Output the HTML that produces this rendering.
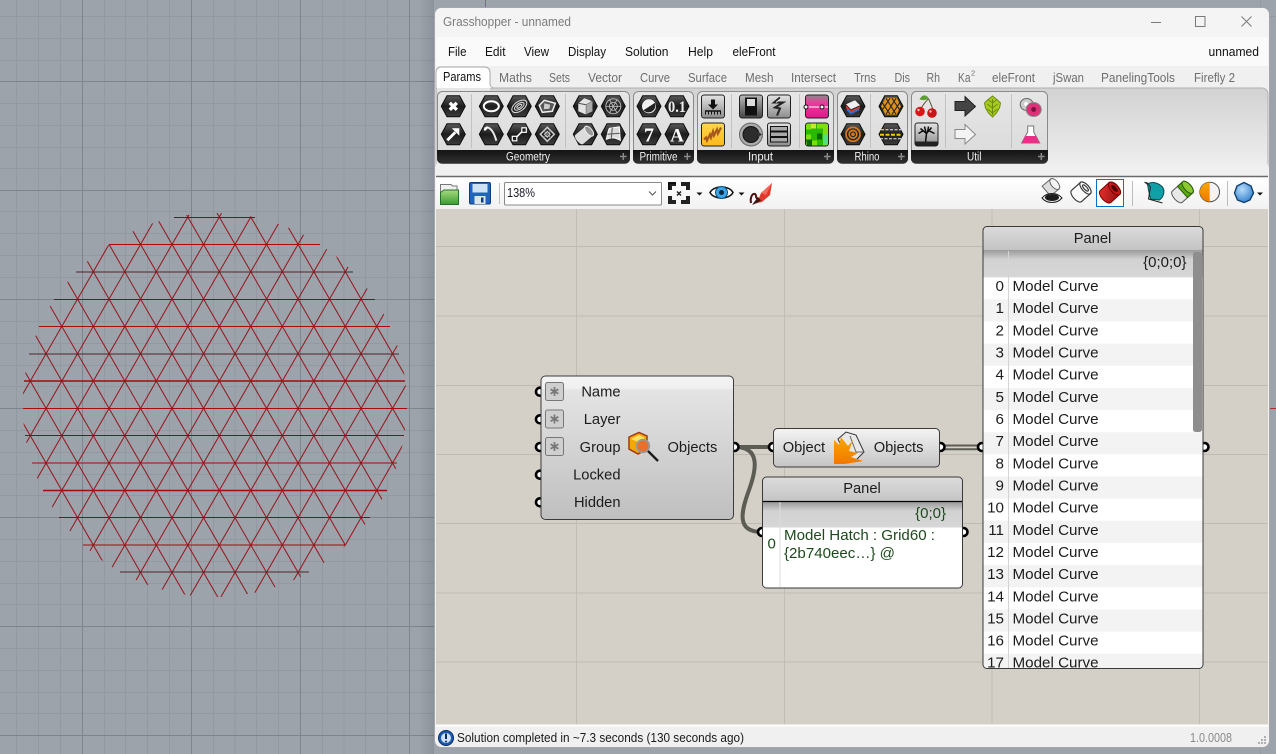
<!DOCTYPE html>
<html><head><meta charset="utf-8"><title>Grasshopper - unnamed</title>
<style>
html,body{margin:0;padding:0;width:1276px;height:754px;overflow:hidden;background:#9ca3ab}
svg{display:block}
text{font-family:"Liberation Sans",sans-serif}
</style></head><body>
<svg xmlns="http://www.w3.org/2000/svg" width="1276" height="754" viewBox="0 0 1276 754">
<defs>
<linearGradient id="hx" x1="0" y1="0" x2="0" y2="1"><stop offset="0" stop-color="#5a5a5a"/><stop offset=".5" stop-color="#1c1c1c"/><stop offset="1" stop-color="#3c3c3c"/></linearGradient>
<linearGradient id="rb" x1="0" y1="0" x2="0" y2="1"><stop offset="0" stop-color="#d2d2d2"/><stop offset="1" stop-color="#eeeeee"/></linearGradient>
<linearGradient id="pn" x1="0" y1="0" x2="0" y2="1"><stop offset="0" stop-color="#e6e6e6"/><stop offset="1" stop-color="#dadada"/></linearGradient>
<linearGradient id="ft" x1="0" y1="0" x2="0" y2="1"><stop offset="0" stop-color="#141414"/><stop offset="1" stop-color="#303030"/></linearGradient>
<linearGradient id="bt" x1="0" y1="0" x2="0" y2="1"><stop offset="0" stop-color="#e4e4e4"/><stop offset="1" stop-color="#8c8c8c"/></linearGradient>
<linearGradient id="bd" x1="0" y1="0" x2="0" y2="1"><stop offset="0" stop-color="#bbb"/><stop offset="1" stop-color="#444"/></linearGradient>
<linearGradient id="nd" x1="0" y1="0" x2="0" y2="1"><stop offset="0" stop-color="#f4f4f4"/><stop offset=".08" stop-color="#f0f0f0"/><stop offset=".1" stop-color="#e4e4e4"/><stop offset="1" stop-color="#bfbfbf"/></linearGradient>
<linearGradient id="nd2" x1="0" y1="0" x2="0" y2="1"><stop offset="0" stop-color="#f4f4f4"/><stop offset=".25" stop-color="#e8e8e8"/><stop offset="1" stop-color="#c4c4c4"/></linearGradient>
<linearGradient id="hd" x1="0" y1="0" x2="0" y2="1"><stop offset="0" stop-color="#dcdcdc"/><stop offset="1" stop-color="#c4c4c4"/></linearGradient>
<linearGradient id="sh" x1="0" y1="0" x2="0" y2="1"><stop offset="0" stop-color="#9a9a9a"/><stop offset=".35" stop-color="#d2d2d2"/><stop offset="1" stop-color="#d6d6d6"/></linearGradient>
<linearGradient id="tb" x1="0" y1="0" x2="0" y2="1"><stop offset="0" stop-color="#ffffff"/><stop offset="1" stop-color="#f2f2f2"/></linearGradient>
<linearGradient id="wsh" x1="0" y1="0" x2="1" y2="0"><stop offset="0" stop-color="#000" stop-opacity="0"/><stop offset="1" stop-color="#000" stop-opacity=".1"/></linearGradient>
<linearGradient id="pk" x1="0" y1="0" x2="0" y2="1"><stop offset="0" stop-color="#8a8a8a"/><stop offset=".35" stop-color="#ec3a9c"/><stop offset="1" stop-color="#e0188c"/></linearGradient>
<linearGradient id="yl" x1="0" y1="0" x2="0" y2="1"><stop offset="0" stop-color="#ffd84a"/><stop offset="1" stop-color="#fdb81e"/></linearGradient>
<linearGradient id="fd" x1="0" y1="0" x2="0" y2="1"><stop offset="0" stop-color="#a4dc7c"/><stop offset="1" stop-color="#3d9a34"/></linearGradient>
<linearGradient id="or" x1="0" y1="0" x2="0" y2="1"><stop offset="0" stop-color="#f8a800"/><stop offset="1" stop-color="#f07800"/></linearGradient>
<radialGradient id="bl" cx=".4" cy=".35" r=".7"><stop offset="0" stop-color="#b8dcf8"/><stop offset="1" stop-color="#2f7fd0"/></radialGradient>
<linearGradient id="red" x1="0" y1="0" x2="1" y2="1"><stop offset="0" stop-color="#e83030"/><stop offset="1" stop-color="#8c0c0c"/></linearGradient>
<polygon id="hex" points="-12,0 -6.3,-10.5 6.3,-10.5 12,0 6.3,10.5 -6.3,10.5" fill="url(#hx)" stroke="#0c0c0c" stroke-width="1"/>
<rect id="btn" x="-11.5" y="-11.5" width="23" height="23" rx="2.5" fill="url(#bt)" stroke="#222" stroke-width="1"/>
</defs>

<!-- viewport background -->
<rect width="1276" height="754" fill="#9ca3ab"/>
<g stroke="#9299a1" stroke-width="1" fill="none">
<path d="M16.5 0V754M38.5 0V754M60.5 0V754M104.5 0V754M125.5 0V754M147.5 0V754M169.5 0V754M213.500 0V754M235 0V754M256.500 0V754M278.500 0V754M322.500 0V754M344 0V754M365.500 0V754M387.500 0V754M1260.500 0V754"/>
<path d="M0 16.5H1276M0 38.5H434M0 60.5H434M0 103.5H434M0 125.5H434M0 147.5H434M0 168.5H434M0 211.5H434M0 233.5H434M0 255.5H434M0 277.5H434M0 321.5H434M0 343.5H434M0 365.5H434M0 386.5H434M0 430.5H434M0 452.5H434M0 474.5H434M0 495.5H434M0 539.5H434M0 561.5H434M0 583.5H434M0 604.5H434M0 648.5H434M0 670.5H434M0 692.5H434M0 713.5H434"/>
</g>
<g stroke="#7f858e" stroke-width="1" fill="none">
<path d="M82.5 0V754M191.5 0V754M300.5 0V754M409.5 0V754"/>
<path d="M0 81.5H434M0 190.5H434M0 299.5H434M0 408.5H434M0 517.5H434M0 626.5H434M0 735.5H434"/>
</g>
<path d="M485.5 0V7" stroke="#3aa03a"/>
<path d="M1270 408.5H1276" stroke="#b03030"/>
<rect x="418" y="0" width="16" height="754" fill="url(#wsh)"/>

<!-- hatch -->
<clipPath id="circ"><circle cx="214.7" cy="405" r="192"/></clipPath>
<g clip-path="url(#circ)" fill="none" stroke="#951a20" stroke-width="1.05">
<path d="M71.6 200l-236.2 410m267.7-410l-236.2 410m267.7-410l-236.2 410m267.7-410l-236.2 410m267.7-410l-236.2 410m267.7-410l-236.2 410m267.7-410l-236.2 410m267.7-410l-236.2 410m267.7-410l-236.2 410m267.7-410l-236.2 410m267.7-410l-236.2 410m267.7-410l-236.2 410m267.7-410l-236.2 410m267.7-410l-236.2 410m267.7-410l-236.2 410m267.7-410l-236.2 410m267.7-410l-236.2 410"/>
<path d="M-137 200l236.2 410m-204.7-410l236.2 410m-204.7-410l236.2 410m-204.7-410l236.2 410m-204.7-410l236.2 410m-204.7-410l236.2 410m-204.7-410l236.2 410m-204.7-410l236.2 410m-204.7-410l236.2 410m-204.7-410l236.2 410m-204.7-410l236.2 410m-204.7-410l236.2 410m-204.7-410l236.2 410m-204.7-410l236.2 410m-204.7-410l236.2 410m-204.7-410l236.2 410m-204.7-410l236.2 410"/>
</g>
<g fill="none" stroke-width="1">
<path d="M174 217.5H255M76 272H353M54 299.5H375M29 354H399M25 435.5H404M59 517.5H370M120 572H309" stroke="#50242a"/>
<path d="M109 244.5H320M39 326.5H390M23 408.5H407M32 463H397M83 545H345" stroke="#a80a0e"/>
<path d="M24 381H405M43 490.5H387" stroke="#a40a0e" stroke-width="1.6"/>
</g>

<!-- window -->
<rect x="434.5" y="7.5" width="835" height="740" rx="7" fill="#f1f1f1" stroke="#a4a8ae"/>
<path d="M436 37V13a5 5 0 0 1 5-5H1263a5 5 0 0 1 5 5V37z" fill="#f4f4f4"/>
<rect x="436" y="37" width="832" height="29" fill="#fafafa"/>
<rect x="436" y="66" width="832" height="22" fill="#f0f0f0"/>
<text x="443" y="26" font-size="12.5" fill="#7c7c7c" textLength="128" lengthAdjust="spacingAndGlyphs">Grasshopper - unnamed</text>
<g fill="none" stroke="#7a7a7a" stroke-width="1">
<path d="M1151 22.5H1161"/>
<rect x="1195.5" y="16.5" width="9.5" height="10"/>
<path d="M1241.5 16.5L1251.5 26.5M1251.5 16.5L1241.5 26.5"/>
</g>
<g font-size="12.5" fill="#111">
<text x="448" y="56" textLength="18.5" lengthAdjust="spacingAndGlyphs">File</text>
<text x="485" y="56" textLength="20.5" lengthAdjust="spacingAndGlyphs">Edit</text>
<text x="524" y="56" textLength="25" lengthAdjust="spacingAndGlyphs">View</text>
<text x="568" y="56" textLength="38" lengthAdjust="spacingAndGlyphs">Display</text>
<text x="625" y="56" textLength="43.5" lengthAdjust="spacingAndGlyphs">Solution</text>
<text x="688" y="56" textLength="25" lengthAdjust="spacingAndGlyphs">Help</text>
<text x="732.5" y="56" textLength="43" lengthAdjust="spacingAndGlyphs">eleFront</text>
<text x="1208.5" y="56" textLength="50.5" lengthAdjust="spacingAndGlyphs">unnamed</text>
</g>

<!-- ribbon -->
<path d="M436 88H1262a6 6 0 0 1 6 6V166H436z" fill="url(#rb)" stroke="#b0b0b0" stroke-width="1"/>
<rect x="436" y="164" width="832" height="13" fill="#f0f0f0"/>
<path d="M436 88V72a5 5 0 0 1 5-5H485a5 5 0 0 1 5 5V84a4 4 0 0 0 4 4" fill="#fff" stroke="#a8a8a8"/>
<path d="M437 88H490V92H437z" fill="#e6e6e6"/>
<text x="443" y="81" font-size="12.5" fill="#111" textLength="38" lengthAdjust="spacingAndGlyphs">Params</text>
<g font-size="13" fill="#6e6e6e">
<text x="499" y="82" textLength="33" lengthAdjust="spacingAndGlyphs">Maths</text>
<text x="549" y="82" textLength="21" lengthAdjust="spacingAndGlyphs">Sets</text>
<text x="588" y="82" textLength="34" lengthAdjust="spacingAndGlyphs">Vector</text>
<text x="640" y="82" textLength="30" lengthAdjust="spacingAndGlyphs">Curve</text>
<text x="688" y="82" textLength="39" lengthAdjust="spacingAndGlyphs">Surface</text>
<text x="745" y="82" textLength="28.5" lengthAdjust="spacingAndGlyphs">Mesh</text>
<text x="791" y="82" textLength="45" lengthAdjust="spacingAndGlyphs">Intersect</text>
<text x="854" y="82" textLength="22" lengthAdjust="spacingAndGlyphs">Trns</text>
<text x="894.5" y="82" textLength="15.5" lengthAdjust="spacingAndGlyphs">Dis</text>
<text x="926.5" y="82" textLength="13.5" lengthAdjust="spacingAndGlyphs">Rh</text>
<text x="958" y="82" textLength="12.5" lengthAdjust="spacingAndGlyphs">Ka</text>
<text x="971" y="75.5" font-size="7.5">2</text>
<text x="992" y="82" textLength="43" lengthAdjust="spacingAndGlyphs">eleFront</text>
<text x="1053" y="82" textLength="31" lengthAdjust="spacingAndGlyphs">jSwan</text>
<text x="1101" y="82" textLength="74" lengthAdjust="spacingAndGlyphs">PanelingTools</text>
<text x="1194" y="82" textLength="41" lengthAdjust="spacingAndGlyphs">Firefly 2</text>
</g>

<!-- ribbon panels -->
<g stroke="#8a8a8a">
<rect x="437.5" y="91.5" width="192" height="72" rx="5" fill="url(#pn)"/>
<rect x="633.5" y="91.5" width="60" height="72" rx="5" fill="url(#pn)"/>
<rect x="697.5" y="91.5" width="136" height="72" rx="5" fill="url(#pn)"/>
<rect x="837.5" y="91.5" width="70" height="72" rx="5" fill="url(#pn)"/>
<rect x="911.5" y="91.5" width="136" height="72" rx="5" fill="url(#pn)"/>
</g>
<g fill="url(#ft)">
<path d="M437 150H630V159a4.5 4.5 0 0 1-4.5 4.5H441.5a4.5 4.5 0 0 1-4.5-4.5z"/>
<path d="M633 150H694V159a4.5 4.5 0 0 1-4.5 4.5H637.5a4.5 4.5 0 0 1-4.5-4.5z"/>
<path d="M697 150H834V159a4.5 4.5 0 0 1-4.5 4.5H701.5a4.5 4.5 0 0 1-4.5-4.5z"/>
<path d="M837 150H908V159a4.5 4.5 0 0 1-4.5 4.5H841.5a4.5 4.5 0 0 1-4.5-4.5z"/>
<path d="M911 150H1048V159a4.5 4.5 0 0 1-4.5 4.5H915.5a4.5 4.5 0 0 1-4.5-4.5z"/>
</g>
<g stroke="#c2c2c2">
<path d="M471.5 94V148M565.5 94V148M731.5 94V148M799.5 94V148M870.5 94V148M945.5 94V148M1011.5 94V148"/>
</g>
<g font-size="11.5" fill="#f2f2f2">
<text x="506" y="160.5" textLength="44" lengthAdjust="spacingAndGlyphs">Geometry</text>
<text x="639.5" y="160.5" textLength="38" lengthAdjust="spacingAndGlyphs">Primitive</text>
<text x="748" y="160.5" textLength="25" lengthAdjust="spacingAndGlyphs">Input</text>
<text x="854.5" y="160.5" textLength="25" lengthAdjust="spacingAndGlyphs">Rhino</text>
<text x="967" y="160.5" textLength="14.5" lengthAdjust="spacingAndGlyphs">Util</text>
</g>
<g fill="none" stroke="#8a8a8a" stroke-width="1.5">
<path d="M623.3 153V160M620 156.5H626.6M687.3 153V160M684 156.5H690.6M827.3 153V160M824 156.5H830.6M901.3 153V160M898 156.5H904.6M1041.3 153V160M1038 156.5H1044.6"/>
</g>

<!-- Geometry icons -->
<g transform="translate(453.3 106.3)"><use href="#hex"/><path d="M-3.5 -3.5L3.5 3.5M3.5 -3.5L-3.5 3.5" stroke="#fff" stroke-width="3.4" fill="none"/></g>
<g transform="translate(453.3 134.3)"><use href="#hex"/><path d="M-6 6L2 -2" stroke="#fff" stroke-width="2.8"/><path d="M-1.5 -6H6V1.500z" fill="#fff"/></g>
<g transform="translate(491.3 106.3)"><use href="#hex"/><ellipse rx="7.5" ry="5" fill="none" stroke="#fff" stroke-width="2"/></g>
<g transform="translate(491.3 134.3)"><use href="#hex"/><path d="M-7 -5.5L-4 -7C0 -6 3 -1 5 6.5" fill="none" stroke="#e8e8e8" stroke-width="2"/><path d="M-7 -4L-4 -7" stroke="#fff" stroke-width="2"/></g>
<g transform="translate(519.3 106.3)"><use href="#hex"/><g transform="rotate(-35)" fill="none" stroke="#ddd"><ellipse rx="8.500" ry="4.800"/><ellipse rx="5.5" ry="2.8"/><ellipse rx="3" ry="1.2"/></g></g>
<g transform="translate(519.3 134.3)"><use href="#hex"/><path d="M-4 4L4 -4" stroke="#fff" stroke-width="1.5"/><rect x="-7" y="2" width="4.5" height="4.5" fill="#222" stroke="#fff" stroke-width="1.2"/><rect x="2.5" y="-6.5" width="4.5" height="4.5" fill="#222" stroke="#fff" stroke-width="1.2"/></g>
<g transform="translate(547.3 106.3)"><use href="#hex"/><path d="M-8 -1L-3 -6L8 -3L5 5L-5 6z" fill="#555" stroke="#eee" stroke-width="1.5"/><path d="M-3 -3L3 -1.5L2 2.5L-3.5 3z" fill="#ccc"/></g>
<g transform="translate(547.3 134.3)"><use href="#hex"/><path d="M0 -7L7 0L0 7L-7 0z" fill="none" stroke="#ccc" stroke-width="1.5"/><path d="M-3.5 -3.5L3.5 3.5M3.5 -3.5L-3.5 3.5" stroke="#888"/><rect x="-2" y="-2" width="4" height="4" fill="none" stroke="#ddd" transform="rotate(45)"/></g>
<g transform="translate(585.3 106.3)"><use href="#hex"/><path d="M-7 -3L-1 -8L7 -5V5L0 8L-7 5z" fill="#e4e4e4"/><path d="M-7 -3L1 -1.5L7 -5M1 -1.5V8" fill="none" stroke="#555"/><path d="M1 -1.5L7 -5V5L1 8z" fill="#aaa"/></g>
<g transform="translate(585.3 134.3)"><use href="#hex"/><g transform="rotate(-40)"><rect x="-8" y="-6" width="13" height="12" fill="#dcdcdc"/><ellipse cx="-8" rx="2.5" ry="6" fill="#dcdcdc"/><ellipse cx="5" rx="3" ry="6" fill="#999" stroke="#eee"/></g></g>
<g transform="translate(613.3 106.3)"><use href="#hex"/><g fill="none" stroke="#bbb" stroke-width=".9"><circle r="7.5"/><circle r="4"/><path d="M-8 0H8M-4 -7L4 7M4 -7L-4 7"/></g></g>
<g transform="translate(613.3 134.3)"><use href="#hex"/><path d="M-7 5C-6 0-5 -4-4 -6L6 -7.5L7 6C2 3 -3 3 -7 5z" fill="#dcdcdc" stroke="#fff"/><path d="M-1 -6.5L-2 4M-6 0L6.5 -1" stroke="#555" fill="none"/></g>

<!-- Primitive -->
<g transform="translate(649 106.3)"><use href="#hex"/><circle r="7" fill="#f2f2f2"/><path d="M-5.500 4A7 7 0 0 0 6 -3.500z" fill="#222"/></g>
<g transform="translate(677 106.3)"><use href="#hex"/><text x="0" y="5.5" font-size="16" font-weight="bold" text-anchor="middle" fill="#eee" style="font-family:'Liberation Serif',serif" textLength="18" lengthAdjust="spacingAndGlyphs">0.1</text></g>
<g transform="translate(649 134.3)"><use href="#hex"/><text x="0" y="7" font-size="20" font-weight="bold" text-anchor="middle" fill="#fff" style="font-family:'Liberation Serif',serif">7</text></g>
<g transform="translate(677 134.3)"><use href="#hex"/><text x="0" y="7" font-size="19" font-weight="bold" text-anchor="middle" fill="#fff" style="font-family:'Liberation Serif',serif">A</text></g>

<!-- Input -->
<g transform="translate(713 106.5)"><use href="#btn"/><path d="M-2 -7H2V-2H5L0 3L-5 -2H-2z" fill="#111"/><path d="M-8 4.5H8" stroke="#111" stroke-width="1.5"/><path d="M-7.5 5V8M-4.5 5V8M-1.5 5V8M1.5 5V8M4.5 5V8M7.5 5V8" stroke="#111"/></g>
<g transform="translate(713 134.5)"><rect x="-11.5" y="-11.5" width="23" height="23" rx="2.5" fill="url(#yl)" stroke="#222"/><path d="M-9 5L-7 3L-6 6L-3 0L-2 3L0 -3L1 1L4 -5L5 -1L8 -7" fill="none" stroke="#a85a1e" stroke-width="2.2"/></g>
<g transform="translate(751 106.5)"><rect x="-11.5" y="-11.5" width="23" height="23" rx="2.5" fill="url(#bd)" stroke="#222"/><rect x="-6" y="-9" width="12" height="18" fill="#111"/><rect x="-4" y="-7.5" width="8" height="7" fill="#ddd"/></g>
<g transform="translate(751 134.5)"><circle r="11.5" fill="#aaa" stroke="#666"/><circle r="8" fill="#2c2c2c" stroke="#111"/><path d="M7 -3L11 0L7 3z" fill="#333"/></g>
<g transform="translate(779 106.5)"><use href="#btn"/><path d="M1 -9L-5 -4H4L-4 1L1 2L-2 9" fill="none" stroke="#222" stroke-width="2"/><path d="M2 -8L-3 -4" stroke="#eee"/></g>
<g transform="translate(779 134.5)"><use href="#btn"/><g fill="#aaa" stroke="#111"><rect x="-8.5" y="-8" width="17" height="4.5"/><rect x="-8.5" y="-2.5" width="17" height="4.5"/><rect x="-8.5" y="3" width="17" height="4.5"/></g></g>
<g transform="translate(817 106.5)"><rect x="-11.5" y="-11.5" width="23" height="23" rx="2.5" fill="url(#pk)" stroke="#222"/><path d="M-11 0.5H11" stroke="#fff"/><circle cx="-11" cy="0.5" r="2" fill="#fff" stroke="#111"/><circle cx="5" cy="0.5" r="2" fill="#fff" stroke="#111"/></g>
<g transform="translate(817 134.5)"><rect x="-11.5" y="-11.5" width="23" height="23" rx="2.5" fill="#7ce010" stroke="#222"/><path d="M-6 -11H0V-6H6V0H11V6H6V11H0V6H-6V0H-11V-5H-6z" fill="#2bb800"/><path d="M-11 5H-5V11H-10zM0 -1H5V5H0z" fill="#0a6a00"/><path d="M6 0H11V10H6z" fill="#50e080"/><path d="M-6 -11H-1V-6H-6z" fill="#c8e830"/></g>

<!-- Rhino -->
<g transform="translate(853 106.3)"><use href="#hex"/><path d="M-7 -2L2 -6L7 -1L-2 3z" fill="#f0f0f0"/><path d="M-7 -1L-2 4L7 0V2L-2 6L-7 2z" fill="#d83a1e"/><path d="M-6 3L-2 7L6 3" fill="none" stroke="#3a6ad0" stroke-width="2"/></g>
<g transform="translate(853 134.3)"><use href="#hex"/><g fill="none" stroke="#d87a1a" stroke-width="1.7"><circle r="7"/><circle r="3.8"/><circle r="1"/></g></g>
<g transform="translate(891 106.3)"><use href="#hex"/><polygon points="-10,0 -5.5,-8.5 5.5,-8.5 10,0 5.5,8.5 -5.5,8.5" fill="#e0901a"/><g stroke="#222" stroke-width="1"><path d="M-9 -4L-1 8M-5 -8L5 8M1 -8L9 4M9 -4L1 8M5 -8L-5 8M-1 -8L-9 4"/></g></g>
<g transform="translate(891 134.3)"><use href="#hex"/><path d="M-10 -4.5H10M-11 4.5H11" stroke="#eee" stroke-dasharray="3 1.5"/><path d="M-11 0.5H11" stroke="#f8c800" stroke-width="2" stroke-dasharray="4 1.5"/></g>

<!-- Util -->
<g transform="translate(926.5 106.5)"><path d="M2 -8C-1 -4-5 -1-6 4M2 -8C4 -3 6 1 7 5" fill="none" stroke="#553" stroke-width="1"/><path d="M2 -9C-2 -13-5 -11-7 -7C-3 -6 0 -6 2 -9z" fill="#5aa030"/><circle cx="-6.5" cy="5" r="4.8" fill="#d81818"/><circle cx="5.5" cy="6.5" r="4.8" fill="#c81414"/><circle cx="-8" cy="3.5" r="1.2" fill="#fbb"/><circle cx="4" cy="5" r="1.2" fill="#fbb"/></g>
<g transform="translate(926.5 134.5)"><rect x="-11.5" y="-11.5" width="23" height="23" rx="2.5" fill="url(#bt)" stroke="#222"/><path d="M-1 8L0 -1L-6 -6M0 -1L5 -7M-3 -4L-8 -1M2 -4L8 -1M0 0L-2 -8M1 -2L2 -8" fill="none" stroke="#0c0c0c" stroke-width="1.5"/><rect x="-11" y="7" width="22" height="4" fill="#222"/></g>
<path d="M955 101.5H965V96.5L975.5 106.5L965 116V110.5H955z" fill="#444" stroke="#222"/>
<path d="M955 129.5H965V124.5L975.5 134.5L965 144V138.5H955z" fill="#f4f4f4" stroke="#888"/>
<g transform="translate(992.5 107)"><path d="M0 -11L5 -7L8 -4L7 1L4 6L0 10L-4 6L-7 1L-8 -4L-5 -7z" fill="#a8cc1c" stroke="#6c8a10"/><path d="M0 -8V8M-5 -3L0 1L5 -3M-5 2L0 6L5 2M-4 -7L0 -4L4 -7" fill="none" stroke="#6c8a10"/></g>
<g transform="translate(1030.7 107)"><ellipse cx="-4" cy="-2.5" rx="6.5" ry="6" fill="#ccc" stroke="#666"/><ellipse cx="-4.5" cy="-3" rx="2" ry="2" fill="#fff"/><ellipse cx="3" cy="2.5" rx="7.5" ry="7" fill="#dc3078" stroke="#888"/><circle cx="3" cy="2.5" r="2.5" fill="#801040"/></g>
<g transform="translate(1030.7 135)"><path d="M-3 -9H3V-3L9 8H-9L-3 -3z" fill="#fff" stroke="#777"/><path d="M-5.5 1H5.5L9 8H-9z" fill="#e83088"/></g>

<!-- toolbar -->
<rect x="436" y="177" width="832" height="32" fill="url(#tb)"/>
<path d="M436 176.5H1268" stroke="#6a6a6a" stroke-width="1.5"/>
<path d="M440.5 204.5V184.5H451L452.5 186H457V190.5H458.5V204.5z" fill="#f0f0f0" stroke="#777"/>
<path d="M440.5 204.5V192.5L444 190H458.5V204.5z" fill="url(#fd)" stroke="#25702a"/>
<g><rect x="469.5" y="182.5" width="21" height="21.5" rx="1.5" fill="#1f65c0" stroke="#123a7a"/><rect x="472.5" y="184" width="15" height="8.5" fill="#cfe2f4"/><rect x="474.5" y="196" width="11" height="8" fill="#dce6f0"/><rect x="481" y="197.5" width="2.5" height="5" fill="#123a7a"/></g>
<path d="M499.5 183V204" stroke="#c0c0c0"/>
<rect x="504.5" y="182.5" width="157" height="22.5" fill="#fff" stroke="#8a8a8a" rx="1"/>
<text x="507" y="197" font-size="12.5" fill="#1a1a2a" textLength="28" lengthAdjust="spacingAndGlyphs">138%</text>
<path d="M649 191.5L652.5 195L656 191.5" fill="none" stroke="#555"/>
<!-- focus -->
<g fill="#222">
<path d="M668 182H676V186H672V190H668zM681 182H690V190H686V186H681zM668 196H672V200H676V204H668zM686 196H690V204H681V200H686z"/>
<path d="M668 182H676V184H670V190H668z" fill="#111"/>
</g>
<path d="M677 191.500L681 195.500M681 191.500L677 195.500" stroke="#222" stroke-width="1.500"/>
<path d="M696.500 192.500H702.500L699.500 195.500z" fill="#111"/>
<path d="M710 192.500C714 185 729 185 733 192.500C729 200 714 200 710 192.500z" fill="#fff" stroke="#111" stroke-width="1.5"/>
<circle cx="721.5" cy="192.500" r="6" fill="#3aa4e8" stroke="#12527a"/>
<circle cx="721.5" cy="192.500" r="2.5" fill="#0a2a40"/>
<path d="M738.5 192.500H744.5L741.5 195.500z" fill="#111"/>
<!-- pencil -->
<path d="M751 203C750 198 752 193 755 194C757 195 755 199 758 198" fill="none" stroke="#4a1010" stroke-width="2"/>
<path d="M757 203L761 193L772 183L770 195L762 202z" fill="#e0382a"/>
<path d="M761 193L772 183L766 195z" fill="#f46a5a"/>
<path d="M752 205L757 203L761 200.500L758 197z" fill="#3c1414"/>

<!-- toolbar right -->
<g transform="translate(1052 191)"><g transform="rotate(-40 0 -4)"><rect x="-7" y="-11" width="11" height="13" fill="#dedede" stroke="#666"/><ellipse cx="4" cy="-4.500" rx="3.500" ry="6.500" fill="#f4f4f4" stroke="#666"/></g><path d="M-10 7C-5 1 5 1 10 7C5 13 -5 13 -10 7z" fill="#eee" stroke="#222"/><ellipse cy="6.500" rx="7" ry="3.500" fill="#1c1c1c"/></g>
<g transform="translate(1081 192) rotate(-42)" fill="#fafafa" stroke="#333" stroke-width="1.100"><path d="M-6 -7.500H6A3.500 7.500 0 0 1 6 7.500H-6A3.500 7.500 0 0 1-6 -7.500z"/><ellipse cx="6" rx="3.500" ry="7.500"/><ellipse cx="6" rx="1.500" ry="4"/></g>
<rect x="1096.5" y="179.5" width="27" height="27" fill="#fff" stroke="#0a6fc8"/>
<g transform="translate(1110 192.500) rotate(-42)"><path d="M-6 -8H6A4 8 0 0 1 6 8H-6A4 8 0 0 1-6 -8z" fill="url(#red)" stroke="#700"/><ellipse cx="6" rx="4" ry="8" fill="#c81818" stroke="#700"/><ellipse cx="6" rx="2" ry="4.500" fill="#500404"/></g>
<path d="M1132.5 181V206" stroke="#bcbcbc"/>
<g transform="translate(1154.5 192)"><path d="M-10 -10L8 4" stroke="#111" stroke-width="1"/><path d="M-7 -8C-2 -11 4 -9 8 -5C11 -1 9 5 5 8L-4 7L-6 -2z" fill="#12a0a8" stroke="#0a4a50"/><path d="M-8 -10L-4 -5L-6 7L8 11" fill="none" stroke="#222"/></g>
<g transform="translate(1182.5 192) rotate(-42)"><path d="M-7 -7.500H7A3.500 7.500 0 0 1 7 7.500H-7A3.500 7.500 0 0 1-7 -7.500z" fill="#e8e8e8" stroke="#555"/><path d="M0 -7.500H7A3.500 7.500 0 0 1 7 7.500H0z" fill="#5aa810" stroke="#2a5a08"/><ellipse cx="7" rx="3.500" ry="7.500" fill="#8cc830" stroke="#2a5a08"/></g>
<g transform="translate(1209.7 192)"><circle r="9.8" fill="#f4f4f4" stroke="#444"/><path d="M0 -9.8A9.8 9.8 0 0 0 0 9.8z" fill="url(#or)"/></g>
<path d="M1227.5 181V206" stroke="#bcbcbc"/>
<polygon points="1244,182.5 1251,186 1253.5,193 1250,200 1244,202.5 1237.5,200 1234.500,193 1237,186" fill="url(#bl)" stroke="#10406e" stroke-width="1.4"/>
<path d="M1257 192.500H1263L1260 195.500z" fill="#111"/>

<!-- canvas -->
<rect x="436" y="209" width="832" height="516" fill="#d4d0c8"/>
<g stroke="#c2beb6" fill="none">
<path d="M576.5 209V725M784.5 209V725M992 209V725M1199.5 209V725"/>
<path d="M436 246.5H1268M436 316H1268M436 385.5H1268M436 454.5H1268M436 523.5H1268M436 593H1268M436 662H1268" stroke="#bfbbb3"/>
</g>

<!-- wires -->
<g fill="none" stroke="#5c5c54">
<path d="M735 447H772" stroke-width="4"/>
<path d="M735 447C760 447 757 468 749 490C741 512 736 532 762 532" stroke-width="4"/>
<path d="M941 445.500H981M941 449.200H981" stroke-width="2"/>
</g>

<!-- grips -->
<g fill="#fff" stroke="#000" stroke-width="2.600">
<circle cx="540" cy="391.7" r="4"/><circle cx="540" cy="419.3" r="4"/><circle cx="540" cy="447" r="4"/><circle cx="540" cy="474.7" r="4"/><circle cx="540" cy="502.3" r="4"/>
<circle cx="734.500" cy="447" r="4"/><circle cx="773" cy="447" r="4"/><circle cx="940.500" cy="447" r="4"/>
<circle cx="762" cy="532" r="4"/><circle cx="963.500" cy="532" r="4"/>
<circle cx="982" cy="447" r="4"/><circle cx="1204.500" cy="447" r="4"/>
</g>

<!-- component 1 -->
<rect x="541" y="376" width="192.5" height="143.5" rx="4.5" fill="url(#nd)" stroke="#3a3a3a"/>
<g fill="#cfcfcf" stroke="#777">
<rect x="545.5" y="382.5" width="18" height="18" rx="2"/><rect x="545.5" y="410" width="18" height="18" rx="2"/><rect x="545.5" y="437.5" width="18" height="18" rx="2"/>
</g>
<g stroke="#777" stroke-width="1.700" fill="none">
<path d="M554.5 387V396M550.600 389.250L558.400 393.750M558.400 389.250L550.600 393.750"/>
<path d="M554.5 414.500V423.500M550.600 416.750L558.400 421.250M558.400 416.750L550.600 421.250"/>
<path d="M554.5 442V451M550.600 444.250L558.400 448.750M558.400 444.250L550.600 448.750"/>
</g>
<g font-size="14.7" fill="#1c1c1c" text-anchor="end">
<text x="620.5" y="396.5">Name</text>
<text x="620.5" y="424">Layer</text>
<text x="620.5" y="452">Group</text>
<text x="620.5" y="479.5">Locked</text>
<text x="620.5" y="507">Hidden</text>
</g>
<text x="667.5" y="452" font-size="14.7" fill="#1c1c1c">Objects</text>
<!-- search icon -->
<g>
<path d="M629 437L639 432.5L647 436V449L638 454L629 449z" fill="#f4a808" stroke="#a03a10" stroke-width="1.5"/>
<path d="M631 439L639 435L645 438L638 442z" fill="#ffe060"/>
<circle cx="643" cy="446" r="6.300" fill="#e8702a" stroke="#999" stroke-width="1.8"/>
<path d="M648 451L658 461" stroke="#1c1c1c" stroke-width="2.4"/>
</g>

<!-- component 2 -->
<rect x="773.5" y="428.5" width="166" height="38.5" rx="4" fill="url(#nd2)" stroke="#3a3a3a"/>
<text x="782.7" y="452" font-size="14.7" fill="#1c1c1c">Object</text>
<text x="873.7" y="452" font-size="14.7" fill="#1c1c1c">Objects</text>
<path d="M838 439L846 432L856 435L864 452L856 460L846 456z" fill="#e8e8e8" stroke="#333"/>
<path d="M850 436L856 452L864 452" fill="none" stroke="#666"/>
<path d="M834 464V440L839 445L841 437L848 446L853 440L849 451L858 453L851 457L863 461L845 464z" fill="url(#or)"/>

<!-- small panel -->
<clipPath id="p1"><rect x="762.5" y="477" width="200" height="111" rx="4"/></clipPath>
<g clip-path="url(#p1)">
<rect x="762" y="477" width="201" height="112" fill="#fff"/>
<rect x="762" y="477" width="201" height="24.5" fill="url(#hd)"/>
<rect x="762" y="502" width="201" height="25.5" fill="url(#sh)"/>
<path d="M762 501.5H963" stroke="#000" stroke-width="1.2"/>
<path d="M780 502V589" stroke="#dcdcdc"/>
</g>
<rect x="762.5" y="477" width="200" height="111" rx="4" fill="none" stroke="#3a3a3a"/>
<text x="862" y="493" font-size="14.7" fill="#1c1c1c" text-anchor="middle">Panel</text>
<g font-size="15" fill="#1c4a1c">
<text x="946" y="518" text-anchor="end">{0;0}</text>
<text x="767.5" y="548.500">0</text>
<text x="784" y="540" textLength="151" lengthAdjust="spacingAndGlyphs">Model Hatch : Grid60 :</text>
<text x="784" y="558" textLength="111" lengthAdjust="spacingAndGlyphs">{2b740eec…} @</text>
</g>

<!-- large panel -->
<clipPath id="p2"><rect x="983" y="226.5" width="220" height="442" rx="4"/></clipPath>
<g clip-path="url(#p2)">
<rect x="983" y="226" width="221" height="443" fill="#fff"/>
<rect x="983" y="226" width="221" height="24" fill="url(#hd)"/>
<rect x="983" y="250" width="221" height="27.3" fill="url(#sh)"/>
<g fill="#f3f3f3">
<rect x="983" y="299.3" width="221" height="22.1"/><rect x="983" y="343.6" width="221" height="22.1"/><rect x="983" y="387.9" width="221" height="22.1"/><rect x="983" y="432.2" width="221" height="22.1"/><rect x="983" y="476.5" width="221" height="22.1"/><rect x="983" y="520.8" width="221" height="22.1"/><rect x="983" y="565.1" width="221" height="22.1"/><rect x="983" y="609.4" width="221" height="22.1"/><rect x="983" y="653.7" width="221" height="22.1"/>
</g>
<path d="M1008.5 251V669" stroke="#d4d4d4"/>
<rect x="1193" y="252" width="9" height="180" rx="2.500" fill="#8e8e8e"/>
<text x="1012.5" y="667.5" font-size="15.2" fill="#1c1c1c">Model Curve</text>
<text x="1004" y="667.5" font-size="15.2" fill="#1c1c1c" text-anchor="end">17</text>
</g>
<rect x="983" y="226.5" width="220" height="442" rx="4" fill="none" stroke="#3a3a3a"/>
<text x="1092.5" y="243" font-size="14.7" fill="#1c1c1c" text-anchor="middle">Panel</text>
<text x="1186.5" y="267" font-size="15" fill="#1c1c1c" text-anchor="end">{0;0;0}</text>
<g font-size="15.2" fill="#1c1c1c">
<g text-anchor="end">
<text x="1004" y="291">0</text><text x="1004" y="313">1</text><text x="1004" y="335.3">2</text><text x="1004" y="357.5">3</text><text x="1004" y="379.7">4</text><text x="1004" y="401.8">5</text><text x="1004" y="424">6</text><text x="1004" y="446">7</text><text x="1004" y="468.3">8</text><text x="1004" y="490.5">9</text><text x="1004" y="512.7">10</text><text x="1004" y="534.8">11</text><text x="1004" y="557">12</text><text x="1004" y="579.2">13</text><text x="1004" y="601.3">14</text><text x="1004" y="623.5">15</text><text x="1004" y="645.7">16</text>
</g>
<g>
<text x="1012.5" y="291">Model Curve</text>
<text x="1012.5" y="313">Model Curve</text>
<text x="1012.5" y="335.3">Model Curve</text>
<text x="1012.5" y="357.5">Model Curve</text>
<text x="1012.5" y="379.7">Model Curve</text>
<text x="1012.5" y="401.8">Model Curve</text>
<text x="1012.5" y="424">Model Curve</text>
<text x="1012.5" y="446">Model Curve</text>
<text x="1012.5" y="468.3">Model Curve</text>
<text x="1012.5" y="490.5">Model Curve</text>
<text x="1012.5" y="512.7">Model Curve</text>
<text x="1012.5" y="534.8">Model Curve</text>
<text x="1012.5" y="557">Model Curve</text>
<text x="1012.5" y="579.2">Model Curve</text>
<text x="1012.5" y="601.3">Model Curve</text>
<text x="1012.5" y="623.5">Model Curve</text>
<text x="1012.5" y="645.7">Model Curve</text>
</g>
</g>

<!-- status bar -->
<path d="M436 725H1268V741a6 6 0 0 1-6 6H442a6 6 0 0 1-6-6z" fill="#f0f0f0"/>
<path d="M436 725.5H1268" stroke="#fff" stroke-width="2"/>
<circle cx="446" cy="738" r="7.5" fill="#1a5ab0" stroke="#0c2c60"/>
<circle cx="446" cy="738" r="5" fill="#cfe2f8"/>
<path d="M446 733.5V739" stroke="#0c2c60" stroke-width="2"/><circle cx="446" cy="741.5" r="1" fill="#0c2c60"/>
<text x="457" y="742" font-size="12.5" fill="#1a1a1a" textLength="287" lengthAdjust="spacingAndGlyphs">Solution completed in ~7.3 seconds (130 seconds ago)</text>
<text x="1190" y="742" font-size="12.5" fill="#8a8a8a" textLength="42" lengthAdjust="spacingAndGlyphs">1.0.0008</text>
<g fill="#b0b0b0"><rect x="1264" y="736" width="2" height="2"/><rect x="1261" y="739" width="2" height="2"/><rect x="1264" y="739" width="2" height="2"/><rect x="1258" y="742" width="2" height="2"/><rect x="1261" y="742" width="2" height="2"/><rect x="1264" y="742" width="2" height="2"/></g>
</svg>
</body></html>
